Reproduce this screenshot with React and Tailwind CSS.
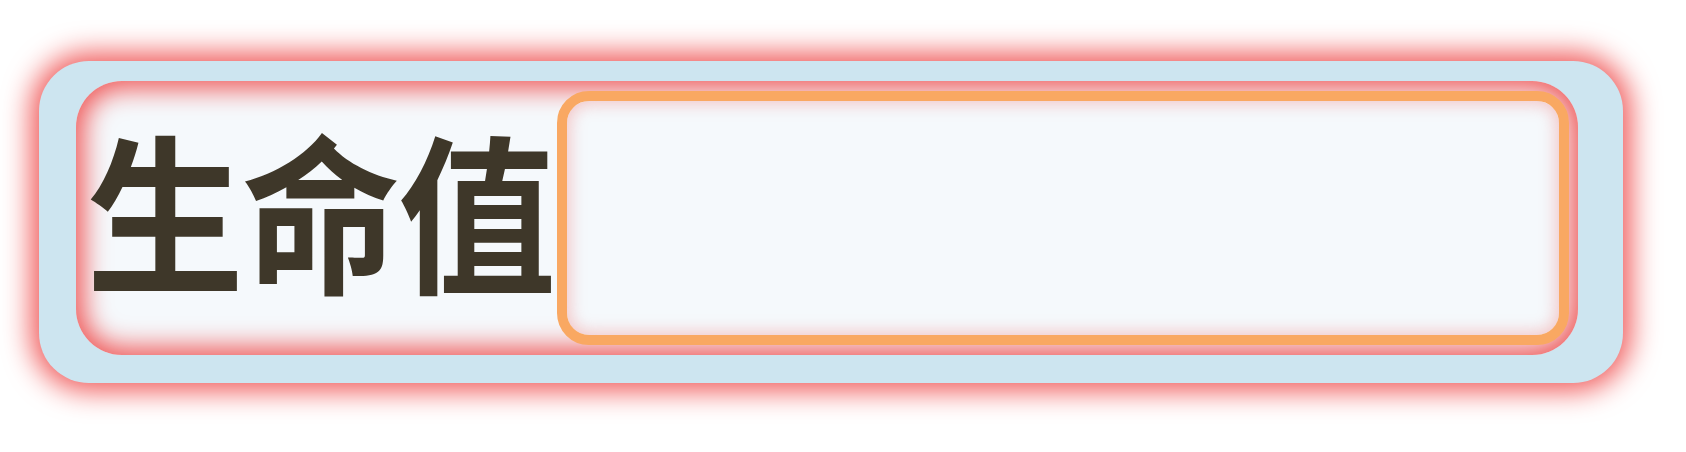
export default function App() {
  return (
    <div className="w-[1686px] h-[452px] bg-white pt-[61px] pl-[39px]">
      <div className="w-[1584px] h-[322px] rounded-[50px] bg-[#cde5f0] pl-[37px] pr-[45px] pt-[20px] pb-[28px] shadow-[0_0_28px_8px_rgba(240,90,90,1)]">
        <div className="flex h-full items-center rounded-[46px] bg-[#f5f9fc] py-[10px] pr-[9px] shadow-[inset_0_0_26px_8px_rgba(240,90,90,1)]">
          <div
            className="w-[481px] shrink-0 pl-[10px] text-[158px] leading-none font-bold text-[#3e3729] tracking-[-2px] scale-y-[1.08] -translate-y-[10px]"
            style={{ fontFamily: '"Noto Sans CJK SC", "Noto Sans CJK TC", sans-serif' }}
          >
            生命值
          </div>
          <div className="h-full flex-1 rounded-[32px] border-[10px] border-[#f9a862] bg-[#f5f9fc] shadow-[inset_0_0_16px_3px_rgba(240,120,120,0.4)]" />
        </div>
      </div>
    </div>
  );
}
